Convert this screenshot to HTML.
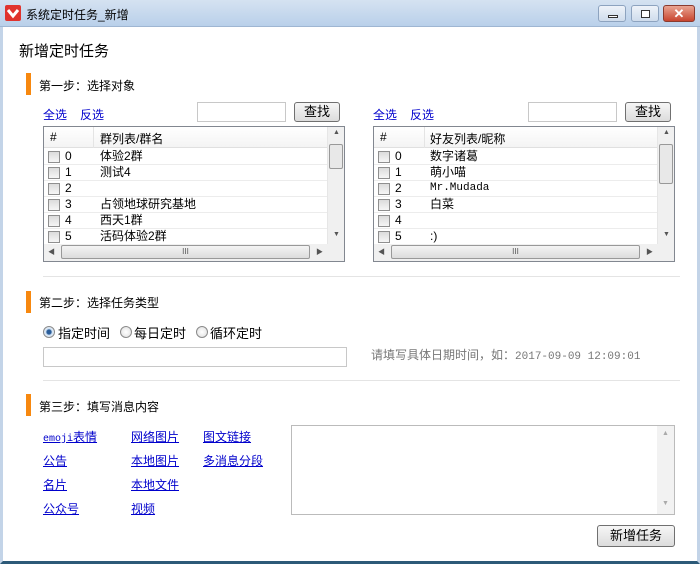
<!DOCTYPE html>
<html><head><meta charset="utf-8"><style>
*{box-sizing:border-box;margin:0;padding:0}
body{width:700px;height:564px;position:relative;overflow:hidden;background:#fff;font-family:"Liberation Sans","Noto Sans CJK SC","WenQuanYi Zen Hei",sans-serif;font-size:12px;color:#000}
.a{position:absolute}
.tb{left:0;top:0;width:700px;height:27px;background:linear-gradient(#d5e2f1,#b9d0ea);border-bottom:1px solid #9fb6d2}
.frame{left:0;top:27px;width:700px;height:537px;border-left:3px solid #c3d4e8;border-right:3px solid #c3d4e8;border-bottom:3px solid #2d5a78}
.bar{width:5px;height:22px;background:#f7880f}
.lk{color:#00c;font-size:12px}
.ul{text-decoration:underline;color:#00c}
.inp{border:1px solid #c8c8c8;background:#fff}
.btn{border:1px solid #707070;border-radius:3px;background:linear-gradient(#f6f6f6,#dcdcdc);text-align:center;font-size:13px}
.list{border:1px solid #828790;background:#fff;overflow:hidden}
.hd{left:0;top:0;height:21px;border-bottom:1px solid #e0e0e0;background:linear-gradient(#fff,#f4f4f4)}
.row{left:0;height:16px;border-bottom:1px solid #ececec;width:283px;font-size:12px;line-height:15px}
.cb{position:absolute;left:4px;top:2px;width:12px;height:12px;border:1px solid #8f8f8f;background:linear-gradient(#dcdcdc,#f6f6f6)}
.vs{top:0;width:17px;height:117px;background:#f0f0f0;border-left:1px solid #e6e6e6}
.hs{left:0;top:117px;height:17px;background:#f0f0f0}
.sep{height:1px;background:#e4e4e4}
.rd{width:12px;height:12px;border-radius:50%;border:1px solid #8a8a8a;background:radial-gradient(#fff,#ddd)}
</style></head><body>
<div class="a tb"></div>
<div class="a" style="left:5px;top:5px;width:16px;height:16px;background:#e0332d;border-radius:2px"><svg width="16" height="16"><path d="M3 5 L8 11 L13 5" stroke="#fff" stroke-width="3" fill="none"/></svg></div>
<div class="a" style="left:26px;top:6px;font-size:12px">系统定时任务_新增</div>
<div class="a" style="left:598px;top:5px;width:28px;height:17px;border:1px solid #8da3bf;border-radius:3px;background:linear-gradient(#eef3f9,#cfdcec)"><div class="a" style="left:9px;top:9px;width:10px;height:3px;border:1px solid #333;background:#fff"></div></div>
<div class="a" style="left:631px;top:5px;width:28px;height:17px;border:1px solid #8da3bf;border-radius:3px;background:linear-gradient(#eef3f9,#cfdcec)"><div class="a" style="left:9px;top:4px;width:9px;height:8px;border:1px solid #333;background:#fff"></div></div>
<div class="a" style="left:663px;top:5px;width:32px;height:17px;border:1px solid #8a3a2e;border-radius:3px;background:linear-gradient(#e9a491,#c8452f);color:#fff;font-weight:bold;text-align:center;line-height:15px;font-size:13px">✕</div>
<div class="a frame"></div>

<div class="a" style="left:19px;top:40px;font-size:15px">新增定时任务</div>

<div class="a bar" style="left:26px;top:73px"></div>
<div class="a" style="left:39px;top:77px">第一步：选择对象</div>

<div class="a lk" style="left:43px;top:106px">全选</div><div class="a lk" style="left:80px;top:106px">反选</div>
<div class="a inp" style="left:197px;top:102px;width:89px;height:20px"></div>
<div class="a btn" style="left:294px;top:102px;width:46px;height:20px;line-height:18px">查找</div>
<div class="a lk" style="left:373px;top:106px">全选</div><div class="a lk" style="left:410px;top:106px">反选</div>
<div class="a inp" style="left:528px;top:102px;width:89px;height:20px"></div>
<div class="a btn" style="left:625px;top:102px;width:46px;height:20px;line-height:18px">查找</div>

<div class="a list" style="left:43px;top:126px;width:302px;height:136px">
 <div class="a hd" style="width:283px"><span class="a" style="left:6px;top:3px">#</span><div class="a" style="left:49px;top:0;width:1px;height:21px;background:#e4e4e4"></div><span class="a" style="left:56px;top:3px">群列表/群名</span></div>
 <div class="a row" style="top:22px"><div class="cb"></div><span class="a" style="left:21px">0</span><span class="a" style="left:56px">体验2群</span></div>
 <div class="a row" style="top:38px"><div class="cb"></div><span class="a" style="left:21px">1</span><span class="a" style="left:56px">测试4</span></div>
 <div class="a row" style="top:54px"><div class="cb"></div><span class="a" style="left:21px">2</span></div>
 <div class="a row" style="top:70px"><div class="cb"></div><span class="a" style="left:21px">3</span><span class="a" style="left:56px">占领地球研究基地</span></div>
 <div class="a row" style="top:86px"><div class="cb"></div><span class="a" style="left:21px">4</span><span class="a" style="left:56px">西天1群</span></div>
 <div class="a row" style="top:102px"><div class="cb"></div><span class="a" style="left:21px">5</span><span class="a" style="left:56px">活码体验2群</span></div>
 <div class="a vs" style="left:283px"><span class="a" style="left:5px;top:2px;font-size:7px;color:#555">▲</span><div class="a" style="left:1px;top:17px;width:14px;height:25px;border:1px solid #999;border-radius:2px;background:#e8e8e8"></div><span class="a" style="left:5px;top:104px;font-size:7px;color:#555">▼</span></div>
 <div class="a hs" style="width:300px"><span class="a" style="left:4px;top:3px;font-size:7px;color:#555">◀</span><div class="a" style="left:17px;top:1px;width:249px;height:14px;border:1px solid #999;border-radius:2px;background:linear-gradient(#f4f4f4,#dcdcdc);text-align:center;font-size:8px;line-height:12px;color:#555">III</div><span class="a" style="left:272px;top:3px;font-size:7px;color:#555">▶</span></div>
</div>

<div class="a list" style="left:373px;top:126px;width:302px;height:136px">
 <div class="a hd" style="width:283px"><span class="a" style="left:6px;top:3px">#</span><div class="a" style="left:50px;top:0;width:1px;height:21px;background:#e4e4e4"></div><span class="a" style="left:56px;top:3px">好友列表/昵称</span></div>
 <div class="a row" style="top:22px"><div class="cb"></div><span class="a" style="left:21px">0</span><span class="a" style="left:56px">数字诸葛</span></div>
 <div class="a row" style="top:38px"><div class="cb"></div><span class="a" style="left:21px">1</span><span class="a" style="left:56px">萌小喵</span></div>
 <div class="a row" style="top:54px"><div class="cb"></div><span class="a" style="left:21px">2</span><span class="a" style="left:56px;font-family:'Liberation Mono',monospace;font-size:11px">Mr.Mudada</span></div>
 <div class="a row" style="top:70px"><div class="cb"></div><span class="a" style="left:21px">3</span><span class="a" style="left:56px">白菜</span></div>
 <div class="a row" style="top:86px"><div class="cb"></div><span class="a" style="left:21px">4</span></div>
 <div class="a row" style="top:102px"><div class="cb"></div><span class="a" style="left:21px">5</span><span class="a" style="left:56px">:)</span></div>
 <div class="a vs" style="left:283px"><span class="a" style="left:5px;top:2px;font-size:7px;color:#555">▲</span><div class="a" style="left:1px;top:17px;width:14px;height:40px;border:1px solid #999;border-radius:2px;background:#e8e8e8"></div><span class="a" style="left:5px;top:104px;font-size:7px;color:#555">▼</span></div>
 <div class="a hs" style="width:300px"><span class="a" style="left:4px;top:3px;font-size:7px;color:#555">◀</span><div class="a" style="left:17px;top:1px;width:249px;height:14px;border:1px solid #999;border-radius:2px;background:linear-gradient(#f4f4f4,#dcdcdc);text-align:center;font-size:8px;line-height:12px;color:#555">III</div><span class="a" style="left:272px;top:3px;font-size:7px;color:#555">▶</span></div>
</div>

<div class="a sep" style="left:43px;top:276px;width:637px"></div>

<div class="a bar" style="left:26px;top:291px"></div>
<div class="a" style="left:39px;top:294px">第二步：选择任务类型</div>
<div class="a rd" style="left:43px;top:326px;background:radial-gradient(#2a5d9a 30%,#cfe0f2 45%,#fff)"></div><div class="a" style="left:58px;top:323px;font-size:13px">指定时间</div>
<div class="a rd" style="left:120px;top:326px"></div><div class="a" style="left:134px;top:323px;font-size:13px">每日定时</div>
<div class="a rd" style="left:196px;top:326px"></div><div class="a" style="left:210px;top:323px;font-size:13px">循环定时</div>
<div class="a inp" style="left:43px;top:347px;width:304px;height:20px"></div>
<div class="a" style="left:371px;top:346px;color:#777">请填写具体日期时间，如：<span style="font-family:'Liberation Mono',monospace;font-size:11px">2017-09-09 12:09:01</span></div>

<div class="a sep" style="left:43px;top:380px;width:637px"></div>

<div class="a bar" style="left:26px;top:394px"></div>
<div class="a" style="left:39px;top:398px">第三步：填写消息内容</div>

<div class="a ul" style="left:43px;top:428px"><span style="font-family:'Liberation Mono',monospace;font-size:10px">emoji</span>表情</div>
<div class="a ul" style="left:131px;top:428px">网络图片</div>
<div class="a ul" style="left:203px;top:428px">图文链接</div>
<div class="a ul" style="left:43px;top:452px">公告</div>
<div class="a ul" style="left:131px;top:452px">本地图片</div>
<div class="a ul" style="left:203px;top:452px">多消息分段</div>
<div class="a ul" style="left:43px;top:476px">名片</div>
<div class="a ul" style="left:131px;top:476px">本地文件</div>
<div class="a ul" style="left:43px;top:500px">公众号</div>
<div class="a ul" style="left:131px;top:500px">视频</div>

<div class="a inp" style="left:291px;top:425px;width:384px;height:90px;border-color:#bbb"><div class="a" style="left:365px;top:0;width:17px;height:88px;background:#f2f2f2"><span class="a" style="left:5px;top:4px;font-size:7px;color:#aaa">▲</span><span class="a" style="left:5px;top:74px;font-size:7px;color:#aaa">▼</span></div></div>

<div class="a btn" style="left:597px;top:525px;width:78px;height:22px;line-height:20px">新增任务</div>
</body></html>
